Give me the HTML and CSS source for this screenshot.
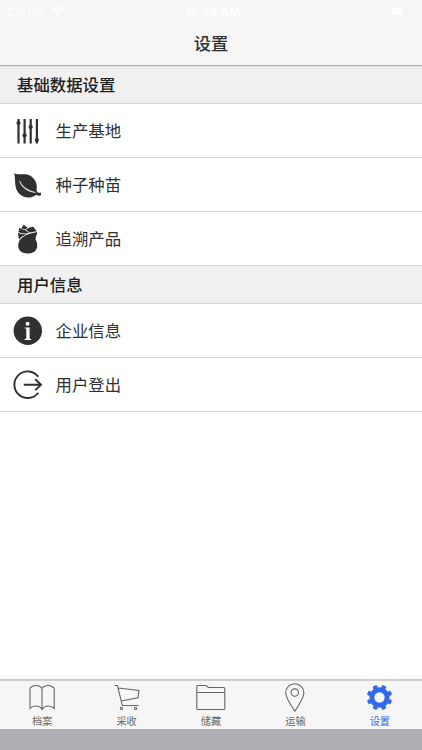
FILE: index.html
```html
<!DOCTYPE html>
<html lang="zh-CN">
<head>
    <meta charset="UTF-8">
    <meta name="viewport" content="width=device-width, initial-scale=1.0">
    <title>设置</title>
    <link rel="stylesheet" href="styles.css">
</head>
<body>
    <div class="app">
        <header class="header">
            <div class="status-bar">
                <div class="carrier">
                    <span>Carrier</span>
                    <svg width="14" height="11" viewBox="0 0 14 11" fill="none" stroke="#fff" stroke-width="2">
                        <path d="M1 4Q7-1 13 4M3.2 6.6Q7 3.4 10.8 6.6"/>
                        <path d="M5 8.4Q7 7 9 8.4L7 10.5Z" fill="#fff" stroke="none"/>
                    </svg>
                </div>
                <div class="time">12:46 AM</div>
                <div class="battery"><span></span></div>
            </div>
            <h1>设置</h1>
        </header>

        <main class="content">
            <h2 class="divider">基础数据设置</h2>
            <a class="item">
                <svg class="icon" viewBox="0 0 28 28">
                    <path d="M4.5 2v24.5M10.6 2v24.5M16.7 2v24.5M22.9 2v24.5" fill="none" stroke="#303030" stroke-width="2.2"/>
                    <circle cx="4.5" cy="6" r="2.1"/>
                    <circle cx="10.6" cy="18.4" r="2.1"/>
                    <circle cx="16.7" cy="10" r="2.1"/>
                    <circle cx="22.9" cy="23" r="2.1"/>
                </svg>
                <span>生产基地</span>
            </a>
            <a class="item">
                <svg class="icon" viewBox="0 0 28 28">
                    <path d="M.2 2C3.500 4.500 8.500 2.200 14 3.800C19.500 5.500 23.200 11.500 22.800 16C22.600 18 22.300 19.800 23.300 21.300Q25 22 27.200 21.800Q26.700 23.200 26.900 24.500Q24.500 25 22 23.700C18 27.600 10.500 27.500 5.500 23C-.2 17.500 1.800 9 .2 2Z"/>
                    <path d="M5.500 10C8.500 15.500 12.500 19 21.500 21.500C14 20.800 8 17 5.500 10Z" fill="#fff" stroke="#fff" stroke-width=".5"/>
                </svg>
                <span>种子种苗</span>
            </a>
            <a class="item">
                <svg class="icon" viewBox="0 0 28 28">
                    <path d="M23.300 7C23 10 21.300 12 21.600 14.500C22.600 16.600 23.400 18.500 23.200 21C22.800 26 19 28.500 13.800 28.500C8.500 28.500 4.300 26 4.200 20.800C4.200 18.500 5 17 5.700 15.100Q10 9 23.300 7Z"/>
                    <path d="M4 7.800Q7 9.500 12.300 9.300Q7.500 11.400 5.200 14.400Q4 11.500 4 7.800Z"/>
                    <path d="M5 2.800Q8 4.900 11 4.900L15 7.700L12.500 8.600Q7.500 8.700 4.300 6.900Q5.500 5.200 5 2.800Z"/>
                    <path d="M7.500 2.900L9.700-.3Q11.500 1.200 13.500 2.200L11.500 4.400Q9.500 4.300 7.500 3.500Z"/>
                    <path d="M11.800 4.600Q15.500 2 19.200 1.800L22.800 6.200L15.500 7.400Z"/>
                </svg>
                <span>追溯产品</span>
            </a>

            <h2 class="divider">用户信息</h2>
            <a class="item">
                <svg class="icon" viewBox="0 0 28 28">
                    <circle cx="13.800" cy="13.800" r="14.200"/>
                    <circle cx="13.600" cy="6.700" r="2" fill="#fff"/>
                    <path d="M10.700 10.400H15.600V21.600L17.200 22.200V23H10.500V22.200L12.300 21.600V11.800L10.700 11.200Z" fill="#fff"/>
                </svg>
                <span>企业信息</span>
            </a>
            <a class="item">
                <svg class="icon" viewBox="0 0 28 28">
                    <g fill="none" stroke="#303030" stroke-width="1.9">
                        <path d="M24.300 5.700A13.300 13.300 0 1 0 24.300 21.700"/>
                        <path d="M9.800 13.700H27M21.300 8.300L27 13.700L21.300 19.100"/>
                    </g>
                </svg>
                <span>用户登出</span>
            </a>
        </main>

        <nav class="tabs">
            <a class="tab">
                <svg class="tab-icon" viewBox="0 0 28 28">
                    <path d="M14 25.500V4.500Q12 1.500 7.700 1.500Q4 1.500 2 4.300V24.500Q4 22 7.700 22Q12 22 14 25.500Q16 22 20.300 22Q24 22 26.200 24.500V4.300Q24 1.500 20.300 1.500Q16 1.500 14 4.500"/>
                </svg>
                <span>档案</span>
            </a>
            <a class="tab">
                <svg class="tab-icon" viewBox="0 0 28 28">
                    <path d="M1.800 1.500H4.500L9.300 21.500H25.500M5.300 4L26 6.500L25 13.700L7.900 17"/>
                    <circle cx="8.400" cy="24.400" r="1.100"/>
                    <circle cx="22.500" cy="24.400" r="1.100"/>
                </svg>
                <span>采收</span>
            </a>
            <a class="tab">
                <svg class="tab-icon" viewBox="0 0 28 28">
                    <path d="M.8 25.500Q-.2 25.500-.2 24.500V2.500Q-.2 1.500.8 1.500H9L11.500 3.500H26.800Q27.800 3.500 27.800 4.500V24.500Q27.800 25.500 26.800 25.500ZM-.2 8.500H27.800"/>
                </svg>
                <span>储藏</span>
            </a>
            <a class="tab">
                <svg class="tab-icon" viewBox="0 0 28 28">
                    <path d="M13.800 27.200Q4.700 13.900 4.700 8.800A9.100 9.100 0 0 1 22.900 8.800Q22.900 13.900 13.800 27.200Z"/>
                    <circle cx="13.800" cy="8.600" r="3.700"/>
                </svg>
                <span>运输</span>
            </a>
            <a class="tab active">
                <svg class="tab-icon" viewBox="0 0 28 28">
                    <g transform="translate(13.500 13.500) rotate(22.500)">
                        <circle r="7.700" stroke-width="5"/>
                        <!-- teeth -->
                        <path d="M0-8V-11.200M0 8V11.200M-8 0H-11.200M8 0H11.200M5.700-5.700L7.900-7.900M5.700 5.700L7.900 7.900M-5.700 5.700L-7.900 7.900M-5.700-5.700L-7.900-7.900" stroke-width="3" stroke-linecap="round"/>
                        <path d="M-1-11.200H1M-1 11.200H1M-11.200-1V1M11.200-1V1M7.200-8.600L8.600-7.200M7.200 8.600L8.600 7.200M-7.200 8.600L-8.600 7.200M-7.200-8.600L-8.600-7.200" stroke-width="3" stroke-linecap="round"/>
                    </g>
                </svg>
                <span>设置</span>
            </a>
        </nav>
        <div class="bottom-bar"></div>
    </div>
</body>
</html>
```

FILE: styles.css
```css
* {
    box-sizing: border-box;
}

body {
    margin: 0;
    font-family: "Noto Sans CJK SC", sans-serif;
    color: #303030;
    background-color: #fff;
}

.app {
    display: flex;
    flex-direction: column;
    height: 750px;
}

.header {
    height: 66px;
    background-color: #f6f6f6;
    border-bottom: 1px solid #b2b2b2;
    box-shadow: 0 1px 0 #dedede;
    position: relative;
}

.status-bar {
    display: grid;
    grid-template-columns: 1fr 1fr 1fr;
    align-items: center;
    height: 22px;
    padding: 0 5px 0 7px;
    font: 12px Inter, sans-serif;
    color: #fff;
}

.carrier {
    display: flex;
    align-items: center;
    gap: 5px;
}

.time {
    padding-left: 2px;
    text-align: center;
    font-weight: 600;
}

.battery {
    justify-self: end;
    width: 25px;
    height: 11px;
    margin-right: 2px;
    padding: 1px;
    border: 1px solid #f9f9f9;
    border-radius: 2px;
}

.battery span {
    display: block;
    width: 10px;
    height: 7px;
    background-color: #fff;
}

h1 {
    margin: 0;
    font-size: 17.3px;
    line-height: 42px;
    font-weight: 500;
    text-align: center;
}

.content {
    flex: 1;
}

.divider {
    height: 38px;
    margin: 0;
    padding: 0 0 1px 17px;
    font-size: 16.4px;
    line-height: 37px;
    font-weight: 500;
    color: #202020;
    background-color: #f0f0f0;
    border-bottom: 1px solid #d8d8d8;
}

.item {
    display: flex;
    align-items: center;
    gap: 13.5px;
    height: 54px;
    padding-left: 14px;
    font-size: 16.4px;
    border-bottom: 1px solid #d8d8d8;
}

.item span {
    padding-bottom: 2px;
}

.icon {
    width: 28px;
    height: 28px;
    fill: #303030;
    overflow: visible;
}

.tabs {
    display: flex;
    height: 50px;
    background-color: #f6f6f6;
    border-top: 2px solid #cecece;
}

.tab {
    flex: 1;
    display: flex;
    flex-direction: column;
    align-items: center;
    gap: 1px;
    padding-top: 3px;
    font-size: 10.2px;
    line-height: 16px;
    color: #666;
}

.tab-icon {
    width: 28px;
    height: 28px;
    fill: none;
    stroke: #666;
    stroke-width: 1.1;
    overflow: visible;
}

.active {
    color: #3369e7;
}

.active .tab-icon {
    stroke: #3369e7;
}

.bottom-bar {
    height: 21px;
    background-color: #afaeb5;
}
```
